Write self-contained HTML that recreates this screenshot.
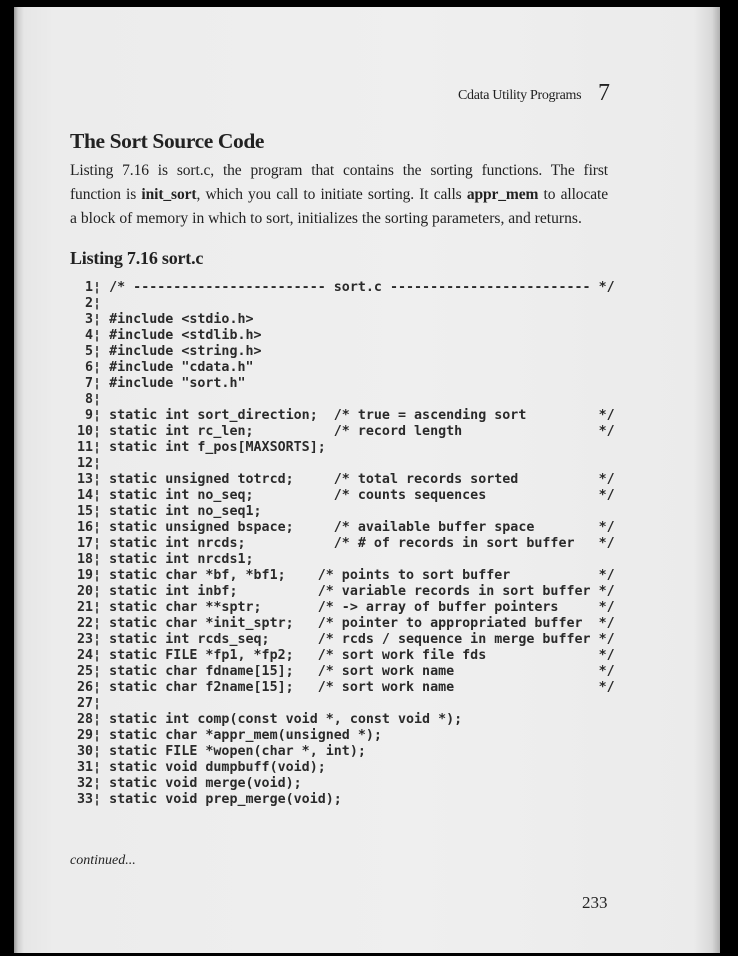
<!DOCTYPE html>
<html><head><meta charset="utf-8"><style>
html,body{margin:0;padding:0;}
body{width:738px;height:956px;background:#000;position:relative;overflow:hidden;}
.page{position:absolute;left:14px;top:7px;width:706px;height:946px;background:linear-gradient(90deg,#9a9a9a 0px,#cfcfcf 4px,#e6e6e6 10px,#ececec 40px,#efefef 400px,#ebebeb 680px,#d8d8d8 698px,#b0b0b0 706px);}
.t{position:absolute;color:#222;font-family:"Liberation Serif",serif;white-space:nowrap;}
.j{position:absolute;left:70px;width:538px;font-family:"Liberation Serif",serif;font-size:15.5px;letter-spacing:-0.1px;color:#222;text-align:justify;text-align-last:justify;white-space:nowrap;}
pre{position:absolute;left:77px;top:280px;margin:0;font-family:"DejaVu Sans Mono","Liberation Mono",monospace;font-size:13.33px;line-height:16px;color:#2a2a2a;font-weight:bold;letter-spacing:0;}
</style></head><body>
<div class="page"></div>
<div class="t" style="left:458px;top:88px;font-size:14px;letter-spacing:-0.3px;">Cdata Utility Programs</div>
<div class="t" style="left:598px;top:80px;font-size:24px;">7</div>
<div class="t" style="left:70px;top:129px;font-size:21.5px;font-weight:bold;letter-spacing:-0.4px;">The Sort Source Code</div>
<div class="j" style="top:162px;">Listing 7.16 is sort.c, the program that contains the sorting functions. The first</div>
<div class="j" style="top:186px;">function is <b>init_sort</b>, which you call to initiate sorting. It calls <b>appr_mem</b> to allocate</div>
<div class="t" style="left:70px;top:210px;font-size:15.6px;">a block of memory in which to sort, initializes the sorting parameters, and returns.</div>
<div class="t" style="left:70px;top:248px;font-size:18px;font-weight:bold;letter-spacing:-0.2px;">Listing 7.16 sort.c</div>
<pre> 1¦ /* ------------------------ sort.c ------------------------- */
 2¦
 3¦ #include &lt;stdio.h&gt;
 4¦ #include &lt;stdlib.h&gt;
 5¦ #include &lt;string.h&gt;
 6¦ #include "cdata.h"
 7¦ #include "sort.h"
 8¦
 9¦ static int sort_direction;  /* true = ascending sort         */
10¦ static int rc_len;          /* record length                 */
11¦ static int f_pos[MAXSORTS];
12¦
13¦ static unsigned totrcd;     /* total records sorted          */
14¦ static int no_seq;          /* counts sequences              */
15¦ static int no_seq1;
16¦ static unsigned bspace;     /* available buffer space        */
17¦ static int nrcds;           /* # of records in sort buffer   */
18¦ static int nrcds1;
19¦ static char *bf, *bf1;    /* points to sort buffer           */
20¦ static int inbf;          /* variable records in sort buffer */
21¦ static char **sptr;       /* -&gt; array of buffer pointers     */
22¦ static char *init_sptr;   /* pointer to appropriated buffer  */
23¦ static int rcds_seq;      /* rcds / sequence in merge buffer */
24¦ static FILE *fp1, *fp2;   /* sort work file fds              */
25¦ static char fdname[15];   /* sort work name                  */
26¦ static char f2name[15];   /* sort work name                  */
27¦
28¦ static int comp(const void *, const void *);
29¦ static char *appr_mem(unsigned *);
30¦ static FILE *wopen(char *, int);
31¦ static void dumpbuff(void);
32¦ static void merge(void);
33¦ static void prep_merge(void);</pre>
<div class="t" style="left:70px;top:853px;font-size:14px;font-style:italic;">continued...</div>
<div class="t" style="left:582px;top:893px;font-size:17px;">233</div>
</body></html>
